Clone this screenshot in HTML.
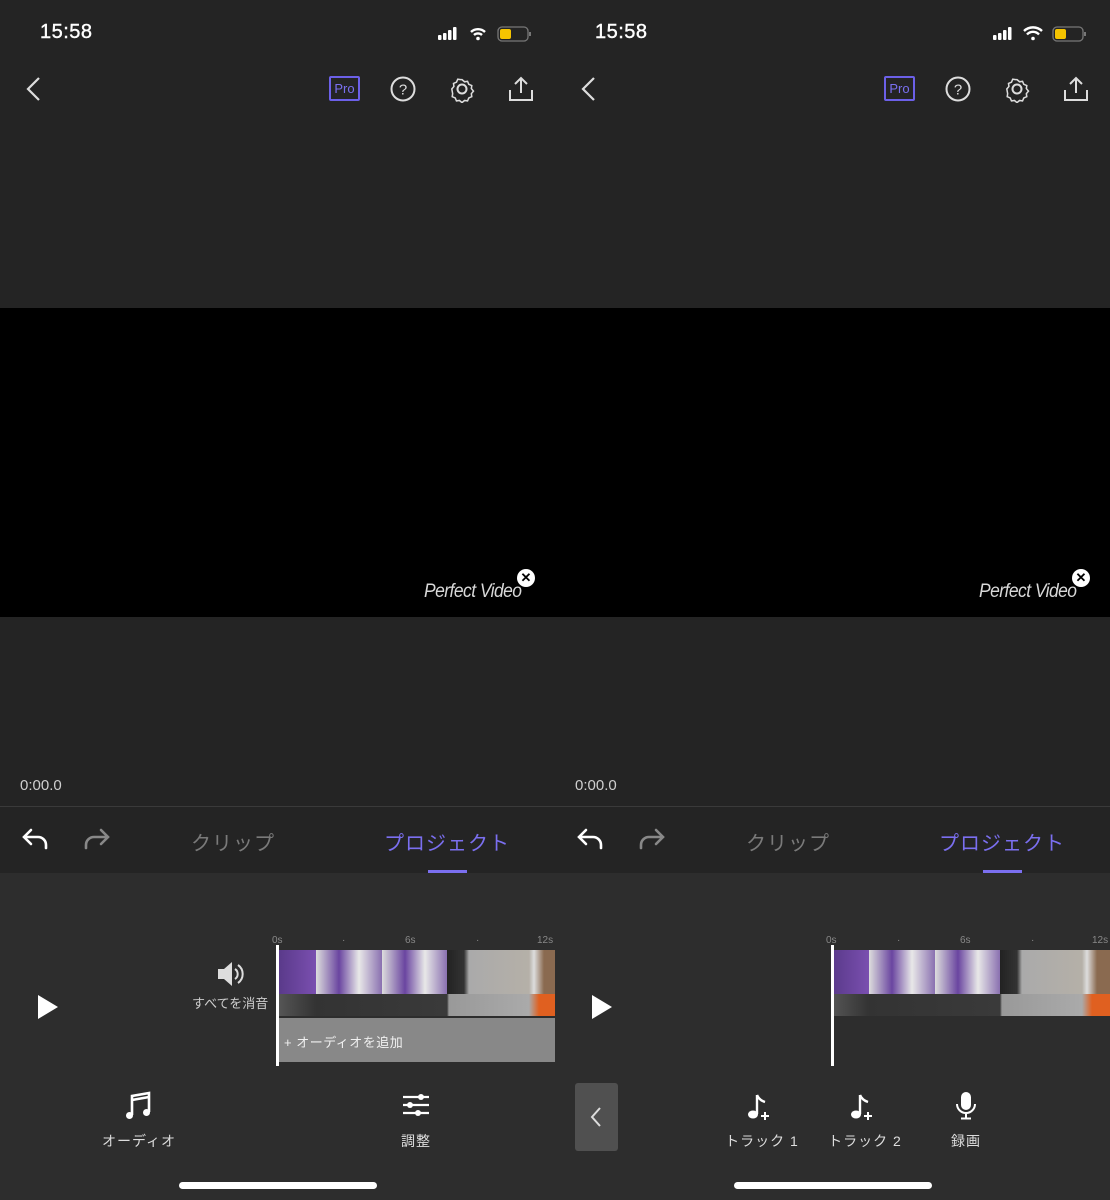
<!DOCTYPE html>
<html><head><meta charset="utf-8">
<style>
*{margin:0;padding:0;box-sizing:border-box}
body{width:1110px;height:1200px;background:#242424;position:relative;overflow:hidden;font-family:"Liberation Sans","Noto Sans CJK JP",sans-serif;color:#fff}
.ph{position:absolute;top:0;width:555px;height:1200px;background:#242424;overflow:hidden}
.a{position:absolute}
.time{left:40px;top:21px;font-size:20px;font-weight:normal;letter-spacing:0.5px;-webkit-text-stroke:0.4px #fff}
.video{left:0;top:308px;width:555px;height:309px;background:#000}
.wm{left:424px;top:581px;font-style:italic;font-size:19px;color:#d8d8d8;font-family:"Liberation Sans",sans-serif;letter-spacing:-0.6px;transform:scaleX(0.92);transform-origin:left top;white-space:nowrap}
.x{left:517px;top:569px;width:18px;height:18px;border-radius:50%;background:#fff;color:#000;font-size:13px;font-weight:bold;text-align:center;line-height:18px}
.tc{left:20px;top:777px;font-size:15px;color:#cfcfcf}
.sep{left:0;top:806px;width:555px;height:1px;background:#3a3a3a}
.tab{top:827px;font-size:20px;letter-spacing:1px}
.panel{left:0;top:873px;width:555px;height:327px;background:#2d2d2d}
.lbl{font-size:14px;color:#ddd;text-align:center;width:100px;letter-spacing:1px}
.clips{left:279px;top:950px;width:276px;height:66px;background:
linear-gradient(90deg,#5a3a8a 0,#7a4fb0 37px,#ddd 37px,#6a45a0 60px,#e8e8e8 80px,#8a70b0 103px,#ddd 103px,#6a45a0 126px,#e8e8e8 146px,#8a70b0 168px,#222 168px,#333 185px,#aaa 190px,#b5b0a8 250px,#ddd 255px,#8a6a50 265px)}
.clips:after{content:"";position:absolute;left:0;right:0;bottom:0;height:22px;background:linear-gradient(90deg,#555 0,#333 37px,#3a3a3a 168px,#999 170px,#aaa 250px,#e06020 260px)}
.ruler{top:935px;font-size:10px;color:#888}
.home{left:179px;top:1182px;width:198px;height:7px;border-radius:4px;background:#fff}
</style></head><body>

<!-- LEFT PHONE -->
<div class="ph" style="left:0">
<div class="a time">15:58</div>
<svg class="a" style="left:436px;top:25px" width="100" height="18" viewBox="0 0 100 18">
<rect x="2" y="10" width="3.5" height="5" rx="1" fill="#fff"/><rect x="7" y="8" width="3.5" height="7" rx="1" fill="#fff"/><rect x="12" y="5" width="3.5" height="10" rx="1" fill="#fff"/><rect x="17" y="2" width="3.5" height="13" rx="1" fill="#fff"/>
<path d="M35 7 a10 10 0 0 1 14 0" stroke="#fff" stroke-width="2.4" fill="none"/><path d="M38 10 a6 6 0 0 1 8 0" stroke="#fff" stroke-width="2.4" fill="none"/><circle cx="42" cy="13.5" r="1.8" fill="#fff"/>
<rect x="62" y="2" width="30" height="14" rx="4" fill="none" stroke="#777" stroke-width="1.3"/><rect x="64" y="4" width="11" height="10" rx="2" fill="#f5c400"/><rect x="93" y="7" width="2" height="4" fill="#777"/>
</svg>
<svg class="a" style="left:24px;top:76px" width="20" height="26"><path d="M15 2 L4 13 L15 24" stroke="#ddd" stroke-width="2.2" fill="none"/></svg>
<div class="a" style="left:329px;top:76px;width:31px;height:25px;border:2px solid #6c60e8;border-radius:2px;color:#7a70f0;font-size:13px;text-align:center;line-height:21px">Pro</div>
<svg class="a" style="left:389px;top:75px" width="28" height="28"><circle cx="14" cy="14" r="11.5" stroke="#ddd" stroke-width="2" fill="none"/><text x="14" y="19.5" font-size="15" fill="#ddd" text-anchor="middle" font-family="Liberation Sans">?</text></svg>
<svg class="a" style="left:448px;top:75px" width="28" height="28" viewBox="0 0 28 28"><path d="M14 3 l3 2.5 3.5-.5 1.5 3.5 3.5 1.5-.5 3.5 2.5 3-2.5 3 .5 3.5-3.5 1.5-1.5 3.5-3.5-.5-3 2.5-3-2.5-3.5.5-1.5-3.5-3.5-1.5.5-3.5L2 14l2.5-3L4 7.5 7.5 6 9 2.5l3.5.5z" stroke="#ddd" stroke-width="1.8" fill="none" transform="translate(14 14) scale(0.85) translate(-14 -14)"/><circle cx="14" cy="14" r="4.5" stroke="#ddd" stroke-width="2" fill="none"/></svg>
<svg class="a" style="left:507px;top:74px" width="28" height="30"><path d="M14 19 V4 M8 10 L14 4 L20 10" stroke="#ddd" stroke-width="2" fill="none"/><path d="M3 16 V26 H25 V16" stroke="#ddd" stroke-width="2" fill="none"/></svg>
<div class="a video"></div>
<div class="a wm">Perfect Video</div>
<div class="a x">✕</div>
<div class="a tc">0:00.0</div>
<div class="a sep"></div>
<svg class="a" style="left:20px;top:826px" width="32" height="28"><path d="M11 4 L4 11 L11 18 M4 11 H18 a8 8 0 0 1 8 8 V22" stroke="#fff" stroke-width="2.6" fill="none" stroke-linecap="round"/></svg>
<svg class="a" style="left:80px;top:826px" width="32" height="28"><path d="M21 4 L28 11 L21 18 M28 11 H14 a8 8 0 0 0 -8 8 V22" stroke="#888" stroke-width="2.6" fill="none" stroke-linecap="round"/></svg>
<div class="a tab" style="left:191px;color:#7a7a7a">クリップ</div>
<div class="a tab" style="left:384px;color:#7b6ff0">プロジェクト</div>
<div class="a" style="left:428px;top:870px;width:39px;height:3px;background:#7b6ff0"></div>
<div class="a panel"></div>
<svg class="a" style="left:36px;top:993px" width="24" height="28"><path d="M2 2 L22 14 L2 26Z" fill="#fff"/></svg>
<svg class="a" style="left:216px;top:960px" width="32" height="28"><path d="M2 9 H8 L16 2 V26 L8 19 H2Z" fill="#ddd"/><path d="M19 9 a6 6 0 0 1 0 10 M22 5 a11 11 0 0 1 0 18" stroke="#ddd" stroke-width="2" fill="none"/></svg>
<div class="a" style="left:192px;top:993px;font-size:13px;color:#ccc">すべてを消音</div>
<div class="a ruler" style="left:272px">0s</div><div class="a ruler" style="left:342px">·</div><div class="a ruler" style="left:405px">6s</div><div class="a ruler" style="left:476px">·</div><div class="a ruler" style="left:537px">12s</div>
<div class="a clips"></div>
<div class="a" style="left:279px;top:1018px;width:276px;height:44px;background:#888"></div>
<div class="a" style="left:284px;top:1032px;font-size:13px;color:#f0f0f0;letter-spacing:0.5px">+ オーディオを追加</div>
<div class="a" style="left:276px;top:945px;width:3px;height:121px;background:#fff"></div>
<svg class="a" style="left:124px;top:1090px" width="30" height="32"><path d="M8 25 V6 L25 3 V22" stroke="#fff" stroke-width="2.6" fill="none"/><path d="M8 10 L25 7" stroke="#fff" stroke-width="2.6"/><circle cx="5.5" cy="25.5" r="3.5" fill="#fff"/><circle cx="22.5" cy="22.5" r="3.5" fill="#fff"/></svg>
<div class="a lbl" style="left:89px;top:1131px">オーディオ</div>
<svg class="a" style="left:401px;top:1092px" width="30" height="28"><path d="M2 5 H28 M2 13 H28 M2 21 H28" stroke="#fff" stroke-width="2.2"/><circle cx="20" cy="5" r="3" fill="#fff"/><circle cx="9" cy="13" r="3" fill="#fff"/><circle cx="17" cy="21" r="3" fill="#fff"/></svg>
<div class="a lbl" style="left:366px;top:1131px">調整</div>
<div class="a home"></div>
</div>

<!-- RIGHT PHONE -->
<div class="ph" style="left:555px">
<div class="a time">15:58</div>
<svg class="a" style="left:436px;top:25px" width="100" height="18" viewBox="0 0 100 18">
<rect x="2" y="10" width="3.5" height="5" rx="1" fill="#fff"/><rect x="7" y="8" width="3.5" height="7" rx="1" fill="#fff"/><rect x="12" y="5" width="3.5" height="10" rx="1" fill="#fff"/><rect x="17" y="2" width="3.5" height="13" rx="1" fill="#fff"/>
<path d="M33 6 a13 13 0 0 1 18 0" stroke="#fff" stroke-width="2.4" fill="none"/><path d="M36 9.5 a8 8 0 0 1 12 0" stroke="#fff" stroke-width="2.4" fill="none"/><circle cx="42" cy="13.5" r="1.8" fill="#fff"/>
<rect x="62" y="2" width="30" height="14" rx="4" fill="none" stroke="#777" stroke-width="1.3"/><rect x="64" y="4" width="11" height="10" rx="2" fill="#f5c400"/><rect x="93" y="7" width="2" height="4" fill="#777"/>
</svg>
<svg class="a" style="left:24px;top:76px" width="20" height="26"><path d="M15 2 L4 13 L15 24" stroke="#ddd" stroke-width="2.2" fill="none"/></svg>
<div class="a" style="left:329px;top:76px;width:31px;height:25px;border:2px solid #6c60e8;border-radius:2px;color:#7a70f0;font-size:13px;text-align:center;line-height:21px">Pro</div>
<svg class="a" style="left:389px;top:75px" width="28" height="28"><circle cx="14" cy="14" r="11.5" stroke="#ddd" stroke-width="2" fill="none"/><text x="14" y="19.5" font-size="15" fill="#ddd" text-anchor="middle" font-family="Liberation Sans">?</text></svg>
<svg class="a" style="left:448px;top:75px" width="28" height="28" viewBox="0 0 28 28"><path d="M14 3 l3 2.5 3.5-.5 1.5 3.5 3.5 1.5-.5 3.5 2.5 3-2.5 3 .5 3.5-3.5 1.5-1.5 3.5-3.5-.5-3 2.5-3-2.5-3.5.5-1.5-3.5-3.5-1.5.5-3.5L2 14l2.5-3L4 7.5 7.5 6 9 2.5l3.5.5z" stroke="#ddd" stroke-width="1.8" fill="none" transform="translate(14 14) scale(0.85) translate(-14 -14)"/><circle cx="14" cy="14" r="4.5" stroke="#ddd" stroke-width="2" fill="none"/></svg>
<svg class="a" style="left:507px;top:74px" width="28" height="30"><path d="M14 19 V4 M8 10 L14 4 L20 10" stroke="#ddd" stroke-width="2" fill="none"/><path d="M3 16 V26 H25 V16" stroke="#ddd" stroke-width="2" fill="none"/></svg>
<div class="a video"></div>
<div class="a wm">Perfect Video</div>
<div class="a x">✕</div>
<div class="a tc">0:00.0</div>
<div class="a sep"></div>
<svg class="a" style="left:20px;top:826px" width="32" height="28"><path d="M11 4 L4 11 L11 18 M4 11 H18 a8 8 0 0 1 8 8 V22" stroke="#fff" stroke-width="2.6" fill="none" stroke-linecap="round"/></svg>
<svg class="a" style="left:80px;top:826px" width="32" height="28"><path d="M21 4 L28 11 L21 18 M28 11 H14 a8 8 0 0 0 -8 8 V22" stroke="#888" stroke-width="2.6" fill="none" stroke-linecap="round"/></svg>
<div class="a tab" style="left:191px;color:#7a7a7a">クリップ</div>
<div class="a tab" style="left:384px;color:#7b6ff0">プロジェクト</div>
<div class="a" style="left:428px;top:870px;width:39px;height:3px;background:#7b6ff0"></div>
<div class="a panel"></div>
<svg class="a" style="left:35px;top:993px" width="24" height="28"><path d="M2 2 L22 14 L2 26Z" fill="#fff"/></svg>
<div class="a ruler" style="left:271px">0s</div><div class="a ruler" style="left:342px">·</div><div class="a ruler" style="left:405px">6s</div><div class="a ruler" style="left:476px">·</div><div class="a ruler" style="left:537px">12s</div>
<div class="a clips" style="left:277px;width:278px"></div>
<div class="a" style="left:276px;top:945px;width:3px;height:121px;background:#fff"></div>
<div class="a" style="left:20px;top:1083px;width:43px;height:68px;background:#505050;border-radius:3px"></div>
<svg class="a" style="left:34px;top:1106px" width="14" height="22"><path d="M11 2 L3 11 L11 20" stroke="#ddd" stroke-width="2" fill="none"/></svg>
<svg class="a" style="left:190px;top:1092px" width="30" height="30"><path d="M12 3 V22" stroke="#fff" stroke-width="2.4"/><path d="M12 3 Q14 8 20 10" stroke="#fff" stroke-width="2.4" fill="none"/><ellipse cx="8" cy="22.5" rx="5" ry="4" fill="#fff"/><path d="M20 20 V28 M16 24 H24" stroke="#fff" stroke-width="2"/></svg>
<div class="a lbl" style="left:157px;top:1131px">トラック 1</div>
<svg class="a" style="left:293px;top:1092px" width="30" height="30"><path d="M12 3 V22" stroke="#fff" stroke-width="2.4"/><path d="M12 3 Q14 8 20 10" stroke="#fff" stroke-width="2.4" fill="none"/><ellipse cx="8" cy="22.5" rx="5" ry="4" fill="#fff"/><path d="M20 20 V28 M16 24 H24" stroke="#fff" stroke-width="2"/></svg>
<div class="a lbl" style="left:260px;top:1131px">トラック 2</div>
<svg class="a" style="left:399px;top:1091px" width="24" height="30"><rect x="7" y="1" width="10" height="18" rx="5" fill="#fff"/><path d="M3 13 a9 9 0 0 0 18 0 M12 22 V27 M7 27.5 H17" stroke="#fff" stroke-width="2" fill="none"/></svg>
<div class="a lbl" style="left:361px;top:1131px">録画</div>
<div class="a home"></div>
</div>
</body></html>
